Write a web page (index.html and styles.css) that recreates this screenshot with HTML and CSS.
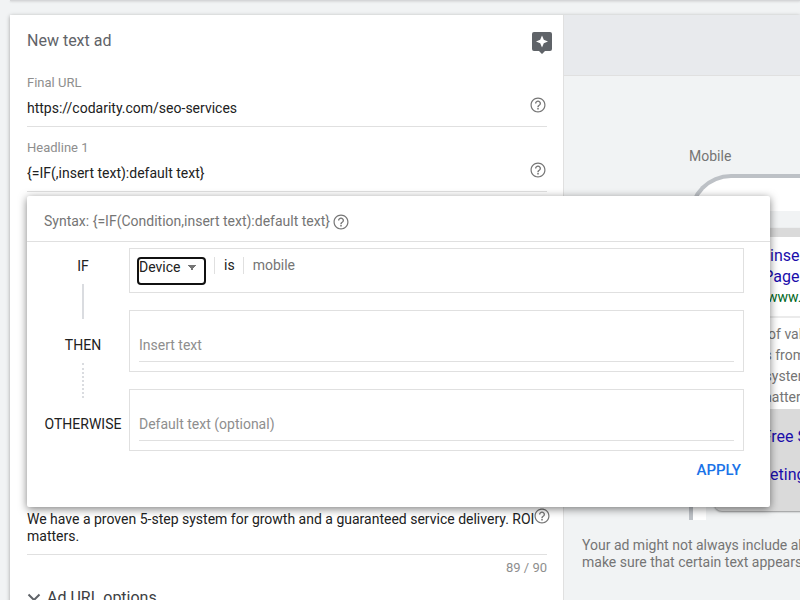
FILE: index.html
```html
<!DOCTYPE html>
<html lang="en">
<head>
  <meta charset="UTF-8">
  <meta name="viewport" content="width=device-width, initial-scale=1.0">
  <title>New text ad</title>
  <link rel="stylesheet" href="styles.css">
</head>
<body>
  <svg class="sprite" aria-hidden="true">
    <symbol id="help" viewBox="0 0 24 24">
      <path d="M11 18h2v-2h-2v2zm1-16C6.48 2 2 6.48 2 12s4.480 10 10 10 10-4.480 10-10S17.520 2 12 2zm0 18.400c-4.630 0-8.400-3.770-8.400-8.400S7.370 3.600 12 3.600s8.400 3.770 8.400 8.400-3.770 8.400-8.400 8.400zM12 6c-2.210 0-4 1.790-4 4h1.800c0-1.210.990-2.200 2.200-2.200s2.200.990 2.200 2.200c0 2-3.100 1.750-3.100 5h1.800c0-2.250 3.100-2.500 3.100-5 0-2.210-1.790-4-4-4z"/>
    </symbol>
  </svg>

  <div class="prev-card"></div>

  <main class="card">
    <!-- Editor -->
    <form class="editor">
      <header class="editor-head">
        <h1>New text ad</h1>
        <button type="button" class="icon-btn" aria-label="Ad suggestions">
          <svg width="20" height="22" viewBox="0 0 20 22">
            <path fill="#5f6368" d="M2 0h16a2 2 0 0 1 2 2v15a2 2 0 0 1-2 2h-5l-3 3-3-3H2a2 2 0 0 1-2-2V2a2 2 0 0 1 2-2z"/>
            <path fill="#fff" d="M10 3.500l1.800 4.200L16 9.500l-4.200 1.800L10 15.500l-1.800-4.200L4 9.500l4.200-1.800z"/>
          </svg>
        </button>
      </header>

      <div class="field">
        <label for="finalUrl">Final URL</label>
        <div class="field-row">
          <input type="text" id="finalUrl" value="https://codarity.com/seo-services">
          <button type="button" class="icon-btn" aria-label="Help"><svg class="help"><use href="#help"/></svg></button>
        </div>
      </div>

      <div class="field">
        <label for="headline1">Headline 1</label>
        <div class="field-row">
          <input type="text" id="headline1" value="{=IF(,insert text):default text}">
          <button type="button" class="icon-btn" aria-label="Help"><svg class="help"><use href="#help"/></svg></button>
        </div>
      </div>

      <div class="field description">
        <div class="field-row">
          <textarea rows="2" aria-label="Description">We have a proven 5-step system for growth and a guaranteed service delivery. ROI matters.</textarea>
          <button type="button" class="icon-btn" aria-label="Help"><svg class="help"><use href="#help"/></svg></button>
        </div>
      </div>
      <div class="counter">89 / 90</div>

      <button type="button" class="url-options">
        <svg width="14" height="9" viewBox="0 0 14 9"><path fill="none" stroke="#5f6368" stroke-width="2" d="M1.500 1.500L7 7l5.500-5.500"/></svg>
        Ad URL options
      </button>
    </form>

    <!-- Preview -->
    <aside class="preview">
      <div class="preview-head"></div>
      <div class="preview-label">Mobile</div>
      <div class="phone">
        <div class="screen">
          <div class="ad">
            <div class="ad-head">
              <a href="#">{=IF(,insert text)<br>Our Page</a>
              <div class="ad-url"><span class="ad-tag">Ad</span>www.codarity.com</div>
            </div>
            <p class="ad-text">Tons of value<br>Leads from a<br>step system<br>ROI matters</p>
            <div class="ad-links">
              <a href="#">Get Free SEO</a>
              <a href="#">Marketing</a>
            </div>
          </div>
        </div>
      </div>
      <p class="note">Your ad might not always include all your text.<br>make sure that certain text appears in your ad</p>
    </aside>

    <!-- IF function popup -->
    <form class="popup">
      <div class="syntax">
        Syntax: {=IF(Condition,insert text):default text}
        <button type="button" class="icon-btn" aria-label="Help"><svg class="help"><use href="#help"/></svg></button>
      </div>
      <div class="rules">
        <div class="step">
          <span>IF</span>
          <i class="line"></i>
        </div>
        <div class="box condition">
          <select aria-label="Condition"><option>Device</option></select>
          <span class="is">is</span>
          <span class="value">mobile</span>
        </div>
        <div class="step">
          <label for="insertText">THEN</label>
          <i class="line dotted"></i>
        </div>
        <div class="box">
          <input type="text" id="insertText" placeholder="Insert text">
        </div>
        <div class="step">
          <label for="defaultText">OTHERWISE</label>
        </div>
        <div class="box">
          <input type="text" id="defaultText" placeholder="Default text (optional)">
        </div>
      </div>
      <button type="button" class="apply">APPLY</button>
    </form>
  </main>
</body>
</html>
```
FILE: styles.css
```css
:root {
  --bg: #f1f3f4;
  --line: #e0e0e0;
  --text: #212121;
  --grey: #757575;
  --hint: #8e8e8e;
  --link: #1a0dab;
}
* {
  box-sizing: border-box;
}
body {
  margin: 0;
  height: 100vh;
  overflow: hidden;
  background: var(--bg);
  font-family: Roboto, "Liberation Sans", sans-serif;
  font-size: 14px;
  line-height: 17px;
  color: var(--text);
}
h1, p {
  margin: 0;
  font-weight: normal;
}
button, input, textarea, select {
  font: inherit;
  color: inherit;
  background: none;
  border: none;
  padding: 0;
  margin: 0;
}
input, textarea {
  outline: none;
  min-width: 0;
  flex: 1;
}
a {
  color: var(--link);
  text-decoration: none;
}
.sprite {
  display: none;
}
.icon-btn {
  display: flex;
  cursor: pointer;
}
.help {
  width: 18px;
  height: 18px;
  fill: var(--grey);
}
.prev-card {
  height: 1px;
  margin: 0 0 14px 10px;
  background: #d5d6d8;
  box-shadow: 0 1px 2px rgba(0,0,0,0.15);
}
.card {
  position: relative;
  display: grid;
  grid-template-columns: 554px 1fr;
  margin-left: 10px;
  min-height: 100vh;
  box-shadow: 0 1px 4px rgba(0,0,0,0.35);
}

/* Editor */
.editor {
  padding: 0 16px 0 17px;
  background: #fff;
  border-right: 1px solid var(--line);
}
.editor-head {
  display: flex;
  justify-content: space-between;
  align-items: center;
  height: 51px;
  margin-right: -5px;
}
.editor-head .icon-btn {
  padding-top: 4px;
}
.editor-head h1 {
  font-size: 16px;
  color: #5f6368;
}
.field {
  height: 61px;
  margin-bottom: 4px;
  padding-top: 8px;
  border-bottom: 1px solid var(--line);
}
.field label {
  display: block;
  font-size: 13px;
  color: var(--hint);
}
.field-row {
  display: flex;
}
.field input {
  height: 34px;
}
.field .icon-btn {
  align-self: flex-start;
  margin-top: 5px;
}
.description {
  height: auto;
  margin: 319px 0 4px;
  padding: 0 0 9px;
}
.description textarea {
  display: block;
  height: 34px;
  margin-right: -6px;
  resize: none;
  overflow: hidden;
}
.description .icon-btn {
  margin: -4px -4px 0 4px;
}
.counter {
  text-align: right;
  font-size: 13px;
  color: var(--hint);
}
.url-options {
  display: flex;
  align-items: center;
  gap: 6px;
  margin-top: 13px;
  font-size: 16px;
  color: #3c4043;
}

/* Preview */
.preview {
  overflow: hidden;
  white-space: nowrap;
  color: var(--grey);
}
.preview-head {
  height: 61px;
  background: #e8eaed;
  border-bottom: 1px solid var(--line);
}
.preview-label {
  margin: 72px 0 9px 125px;
}
.phone {
  width: 360px;
  height: 346px;
  margin-left: 125px;
  padding: 33px 0 0 13px;
  background: #fff;
  border: 4px solid #bdc1c6;
  border-bottom: none;
  border-radius: 42px 42px 0 0;
}
.screen {
  height: 100%;
  padding: 17px 8px 0;
  background: var(--bg);
}
.ad {
  padding-top: 9px;
  background: #dadada;
  border-radius: 0 0 8px 8px;
  box-shadow: 0 1px 2px rgba(0,0,0,0.4);
}
.ad-head {
  padding: 8px 20px;
  background: #fff;
  border-bottom: 2px solid #ebebeb;
  font-size: 16px;
  line-height: 21px;
}
.ad-url {
  display: flex;
  align-items: center;
  gap: 8px;
  font-size: 14px;
  color: #006621;
}
.ad-tag {
  padding: 0 3px;
  border: 1px solid #006621;
  border-radius: 3px;
  line-height: 16px;
}
.ad-text {
  padding: 6px 20px 1px;
  background: #fff;
  font-size: 14px;
  line-height: 21px;
}
.ad-links {
  display: grid;
  gap: 17px;
  padding: 17px 20px 26px;
  font-size: 16px;
  line-height: 21px;
}
.note {
  margin: 17px 0 0 18px;
}

/* Popup */
.popup {
  position: absolute;
  top: 181px;
  left: 17px;
  right: 30px;
  padding-bottom: 28px;
  background: #fff;
  border-radius: 2px;
  box-shadow: 0 2px 8px rgba(0,0,0,0.5);
}
.syntax {
  display: flex;
  align-items: center;
  gap: 2px;
  height: 46px;
  padding: 6px 17px 0;
  border-bottom: 1px solid var(--line);
  color: var(--grey);
}
.rules {
  display: grid;
  grid-template-columns: 76px 1fr;
  gap: 17px 8px;
  padding: 6px 26px 0 18px;
}
.step {
  display: flex;
  flex-direction: column;
  align-items: center;
  padding-top: 27px;
}
.step:first-child {
  padding-top: 10px;
}
.line {
  height: 35px;
  margin: 9px 0 -30px;
  border-left: 2px solid #dadce0;
}
.line.dotted {
  border-left-style: dotted;
}
.box {
  display: flex;
  align-items: flex-end;
  height: 62px;
  padding: 0 9px 9px;
  border: 1px solid var(--line);
}
.box input {
  height: 34px;
  border-bottom: 1px solid var(--line);
}
.box input::placeholder {
  color: var(--hint);
  opacity: 1;
}
.condition {
  align-items: flex-start;
  height: 45px;
  padding: 8px 7px;
}
.condition select {
  width: 69px;
  height: 28px;
  padding: 0 0 9px;
  appearance: none;
  border: 2px solid #111;
  border-radius: 4px;
  background:
    linear-gradient(to bottom left, var(--grey) 50%, transparent 50%) 48px 6px / 5px 5px no-repeat,
    linear-gradient(to bottom right, var(--grey) 50%, transparent 50%) 53px 6px / 5px 5px no-repeat;
}
.condition span {
  height: 17px;
  margin-left: 8px;
  padding-left: 9px;
  border-left: 1px solid var(--line);
}
.condition .value {
  color: var(--grey);
}
.apply {
  display: block;
  margin: 11px 29px 0 auto;
  font-size: 15px;
  font-weight: 500;
  color: #1a73e8;
  cursor: pointer;
}
```
